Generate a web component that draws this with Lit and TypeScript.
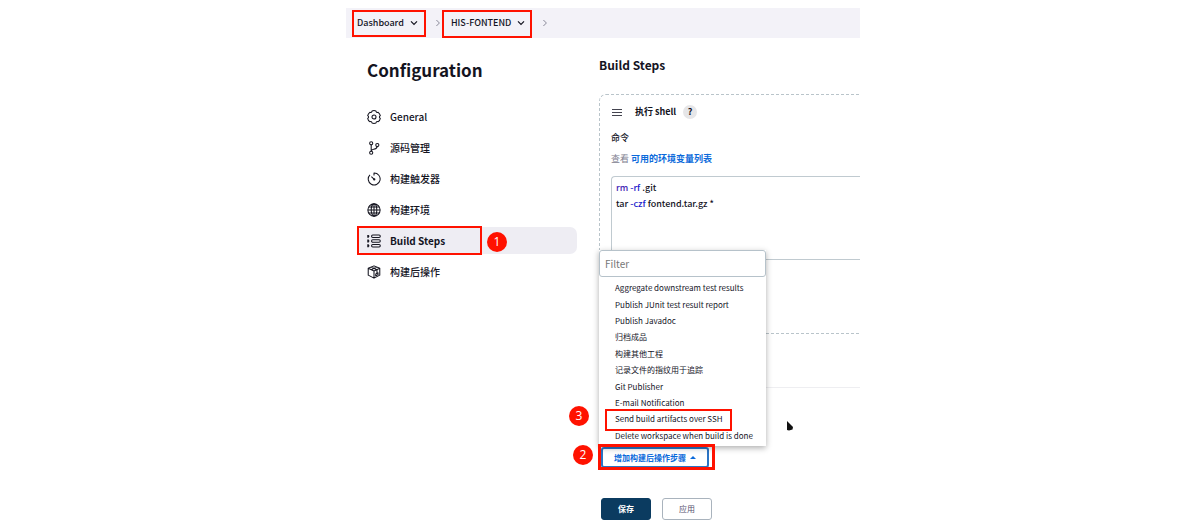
import { LitElement, html, css, svg, nothing } from "lit";
import { customElement, state } from "lit/decorators.js";
import { classMap } from "lit/directives/class-map.js";

const icons = {
  gear: svg`<path d="M5.8 1.15Q8 .2 10.2 1.15Q10.6 3.4 12.8 2.65Q14.8 4.2 15.2 6.5Q13.2 8 15.2 9.5Q14.8 11.8 12.8 13.35Q10.6 12.6 10.2 14.85Q8 15.8 5.8 14.85Q5.4 12.6 3.2 13.35Q1.2 11.8 .8 9.5Q2.8 8 .8 6.5Q1.2 4.2 3.2 2.65Q5.4 3.4 5.8 1.15Z"/><circle cx="8" cy="8" r="2.3"/>`,
  branch: svg`<circle cx="4.8" cy="2.6" r="1.8"/><circle cx="4.8" cy="13.4" r="1.8"/><circle cx="11.8" cy="4.6" r="1.8"/><path d="M4.8 4.4V11.6M11.6 6.4Q11 9.2 7.6 9.4Q5.2 9.6 4.8 11.5"/>`,
  timer: svg`<path d="M3.4 3.2A6.8 6.8 0 1 0 8 1.2V4M5 5.2L8.6 8.8"/><circle cx="8.3" cy="8.5" r=".7"/>`,
  globe: svg`<circle cx="8" cy="8" r="7"/><ellipse cx="8" cy="8" rx="3.2" ry="7"/><path d="M8 1V15M1 8H15M2.2 4.6H13.8M2.2 11.4H13.8"/>`,
  steps: svg`<rect x="5.2" y="1.2" width="10" height="2.8" rx="1.4"/><rect x="5.2" y="6.6" width="10" height="2.8" rx="1.4"/><rect x="5.2" y="12" width="10" height="2.8" rx="1.4"/><path d="M1.2 1V4.2M1.2 6.4V9.6M1.2 11.8V15M1.2 2.6H2.6M1.2 8H2.6M1.2 13.4H2.6" stroke-width="1.8"/>`,
  box: svg`<path d="M8 1L14.6 3.8V11.6L8 15L1.4 11.6V3.8ZM1.4 3.8L8 6.8L14.6 3.8M8 6.8V15M4.6 2.4L11.4 5.4V9M11.4 2.4L4.6 5.4"/><path d="M10 10.2V12.4L12.6 11V8.8Z"/>`,
};

type IconName = keyof typeof icons;

const sections: { icon: IconName; label: string }[] = [
  { icon: "gear", label: "General" },
  { icon: "branch", label: "源码管理" },
  { icon: "timer", label: "构建触发器" },
  { icon: "globe", label: "构建环境" },
  { icon: "steps", label: "Build Steps" },
  { icon: "box", label: "构建后操作" },
];

const postBuildActions = [
  "Aggregate downstream test results",
  "Publish JUnit test result report",
  "Publish Javadoc",
  "归档成品",
  "构建其他工程",
  "记录文件的指纹用于追踪",
  "Git Publisher",
  "E-mail Notification",
  "Send build artifacts over SSH",
  "Delete workspace when build is done",
];

@customElement("app-root")
export class AppRoot extends LitElement {
  @state() private current = "Build Steps";
  @state() private filter = "";
  @state() private open = true;

  static styles = css`
    :host {
      display: block;
      color: #14141f;
      font-family: "Noto Sans CJK SC", "Noto Sans", sans-serif;
      font-size: 10px;
      line-height: 16px;
      background: #fff;
    }
    *, *::before, *::after { box-sizing: border-box; }
    button, input {
      font: inherit;
      color: inherit;
      margin: 0;
      padding: 0;
      border: 0;
      background: none;
    }
    a { color: inherit; text-decoration: none; }
    h1, h2, h3, p, pre, ul, ol { margin: 0; padding: 0; list-style: none; font: inherit; }
    svg { display: block; fill: none; stroke: currentColor; }

    .page {
      max-width: 520px;
      margin: 0 auto;
      padding: 8px 0 6px 6px;
    }
    .crumbs {
      display: flex;
      align-items: center;
      height: 30px;
      padding-left: 11px;
      background: #f3f2f8;
      font-size: 9px;
      font-weight: 500;
    }
    .crumb {
      position: relative;
      display: flex;
      align-items: center;
      gap: 6px;
    }
    .chevron { width: 8px; height: 8px; stroke-width: 1.2; }
    .sep { width: 8px; height: 8px; margin: 0 9px 0 16px; color: #8a8a99; }

    .layout {
      display: grid;
      grid-template-columns: 220px minmax(0, 1fr);
      column-gap: 22px;
      padding-left: 11px;
    }
    .title {
      margin: 19px 0 20px 10px;
      font-size: 17px;
      line-height: 26px;
      font-weight: 600;
    }
    .nav { display: flex; flex-direction: column; gap: 4px; }
    .nav-link {
      position: relative;
      display: flex;
      align-items: center;
      gap: 9px;
      height: 27px;
      padding-left: 10px;
      border-radius: 7px;
      font-weight: 500;
    }
    .nav-link.active { background: #eeedf3; font-weight: 600; }
    .nav-icon { width: 14px; height: 14px; stroke-width: 1.2; stroke-linejoin: round; }

    .heading {
      margin: 17px 0 19px;
      font-size: 12px;
      line-height: 20px;
      font-weight: 600;
    }
    .step {
      height: 240px;
      padding: 9px 0 0 11px;
      border: 1px dashed #b9c4ca;
      border-right: 0;
      border-radius: 7px 0 0 7px;
      font-size: 9px;
    }
    .step-head { display: flex; align-items: center; height: 16px; font-weight: 600; }
    .grip { width: 12px; height: 8px; margin-right: 12px; color: #44444f; }
    .help {
      width: 14px;
      height: 14px;
      margin-left: 7px;
      border-radius: 50%;
      background: #e6e6e8;
      line-height: 14px;
      font-weight: 600;
    }
    .label { margin-top: 10px; font-weight: 500; }
    .hint { margin-top: 5px; color: #80808f; }
    .hint a { color: #0b6adb; font-weight: 600; }
    .editor {
      height: 84px;
      margin-top: 9px;
      padding: 3px 4px;
      border: 1px solid #c0cad0;
      border-right: 0;
      border-radius: 4px 0 0 4px;
      font-weight: 500;
      white-space: pre;
      outline: none;
    }
    .cmd { color: #4424b4; }
    .flag { color: #2222cc; }

    .post { padding-top: 53px; }
    .rule { height: 1px; border: 0; margin: 0; background: #eeeef1; }
    .add-row { display: flex; margin-top: 59px; padding-left: 2px; }
    .anchor { position: relative; }
    .add {
      display: flex;
      align-items: center;
      gap: 4px;
      height: 21px;
      padding: 0 11px;
      border: 2px solid #2b74c4;
      border-radius: 3px;
      color: #0b6adb;
      font-size: 8px;
      font-weight: 600;
    }
    .caret { width: 6px; height: 3px; fill: currentColor; stroke: none; }

    .popup {
      position: absolute;
      left: -2px;
      bottom: calc(100% + 1px);
      width: 167px;
      background: #fff;
      box-shadow: 0 2px 6px rgba(0, 0, 0, 0.32);
    }
    .filter {
      display: block;
      width: 100%;
      height: 27px;
      padding: 0 5px;
      border: 1px solid #b6c2ca;
      border-radius: 3px;
      background: #fff;
      outline: none;
    }
    .filter::placeholder { color: #777; opacity: 1; }
    .options {
      display: flex;
      flex-direction: column;
      height: 169px;
      padding: 3px 0 2px;
      font-size: 8px;
    }
    .option { position: relative; flex: 1; display: flex; align-items: center; }
    .option button { padding-left: 16px; line-height: 16px; white-space: nowrap; }

    .actions { display: flex; gap: 11px; margin-top: 30px; padding-left: 2px; }
    .action {
      width: 50px;
      height: 22px;
      border: 1px solid #a9b3bd;
      border-radius: 3px;
      color: #55506e;
      font-size: 8px;
    }
    .action.primary { border-color: #0b3b60; background: #0b3b60; color: #fff; font-weight: 600; }

    .mark {
      position: absolute;
      border: 2px solid #ff1200;
      pointer-events: none;
    }
    .mark-home { inset: -5px -8px -6px -5px; }
    .mark-job { inset: -5px -7px -7px -9px; }
    .mark-nav { inset: -1px 95px -1px 0; }
    .mark-option { inset: -2px 34px -3px 6px; }
    .mark-add { inset: -3px -6px -2px -3px; border-width: 3px; }
    .badge {
      position: absolute;
      width: 20px;
      height: 20px;
      border-radius: 50%;
      background: #ff1200;
      color: #fff;
      font: 12px/20px "Open Sans", sans-serif;
      text-align: center;
    }
    .badge-nav { left: 130px; top: 5px; }
    .badge-option { left: -30px; top: -5px; }
    .badge-add { left: -28px; top: -2px; }
    .pointer {
      position: absolute;
      left: 185px;
      top: -26px;
      width: 8px;
      height: 11px;
      fill: #111;
      stroke: none;
    }
  `;

  private chevron() {
    return html`<svg class="chevron" viewBox="0 0 8 8" aria-hidden="true"><path d="M1 2.4L4 5.4L7 2.4" /></svg>`;
  }

  private separator() {
    return html`<svg class="sep" viewBox="0 0 8 8" aria-hidden="true"><path d="M2.4 1L5.4 4L2.4 7" /></svg>`;
  }

  private renderSection({ icon, label }: { icon: IconName; label: string }) {
    return html`<li>
      <a
        class=${classMap({ "nav-link": true, active: label === this.current })}
        href="#"
        @click=${(e: Event) => {
          e.preventDefault();
          this.current = label;
        }}
      >
        <svg class="nav-icon" viewBox="0 0 16 16" aria-hidden="true">${icons[icon]}</svg>
        <span>${label}</span>
        ${label === "Build Steps"
          ? html`<span class="mark mark-nav"></span><span class="badge badge-nav">1</span>`
          : nothing}
      </a>
    </li>`;
  }

  private renderPopup() {
    const query = this.filter.toLowerCase();
    const shown = postBuildActions.filter((name) => name.toLowerCase().includes(query));
    return html`<div class="popup">
      <input
        class="filter"
        type="text"
        placeholder="Filter"
        aria-label="Filter"
        .value=${this.filter}
        @input=${(e: Event) => (this.filter = (e.target as HTMLInputElement).value)}
      />
      <ul class="options">
        ${shown.map(
          (name) => html`<li class="option">
            <button type="button">${name}</button>
            ${name.startsWith("Send build")
              ? html`<span class="mark mark-option"></span><span class="badge badge-option">3</span>`
              : nothing}
          </li>`
        )}
      </ul>
    </div>`;
  }

  render() {
    return html`<div class="page">
      <nav class="crumbs" aria-label="Breadcrumb">
        <button class="crumb" type="button">Dashboard ${this.chevron()}<span class="mark mark-home"></span></button>
        ${this.separator()}
        <button class="crumb" type="button">HIS-FONTEND ${this.chevron()}<span class="mark mark-job"></span></button>
        ${this.separator()}
      </nav>
      <div class="layout">
        <aside>
          <h1 class="title">Configuration</h1>
          <ul class="nav">${sections.map((s) => this.renderSection(s))}</ul>
        </aside>
        <main>
          <h2 class="heading">Build Steps</h2>
          <section class="step">
            <div class="step-head">
              <svg class="grip" viewBox="0 0 12 8" aria-hidden="true"><path d="M1 1.5H11M1 4.5H11M1 7.5H11" /></svg>
              <h3>执行 shell</h3>
              <button class="help" type="button">?</button>
            </div>
            <p class="label" id="command">命令</p>
            <p class="hint">查看 <a href="#">可用的环境变量列表</a></p>
            <pre class="editor" role="textbox" aria-multiline="true" aria-labelledby="command" contenteditable="true" spellcheck="false"><span class="cmd">rm</span> <span class="flag">-rf</span> .git
tar <span class="flag">-czf</span> fontend.tar.gz *</pre>
          </section>
          <section class="post">
            <hr class="rule" />
            <div class="add-row">
              <div class="anchor">
                <button class="add" type="button" @click=${() => (this.open = !this.open)}>
                  增加构建后操作步骤
                  <svg class="caret" viewBox="0 0 6 3" aria-hidden="true"><path d="M0 3L3 0L6 3Z" /></svg>
                </button>
                ${this.open ? this.renderPopup() : nothing}
                <span class="mark mark-add"></span>
                <span class="badge badge-add">2</span>
                <svg class="pointer" viewBox="0 0 8 11" aria-hidden="true"><path d="M1 0L7 6L6.5 8.5L3 9.5L1 9Z" /></svg>
              </div>
            </div>
            <div class="actions">
              <button class="action primary" type="button">保存</button>
              <button class="action" type="button">应用</button>
            </div>
          </section>
        </main>
      </div>
    </div>`;
  }
}
